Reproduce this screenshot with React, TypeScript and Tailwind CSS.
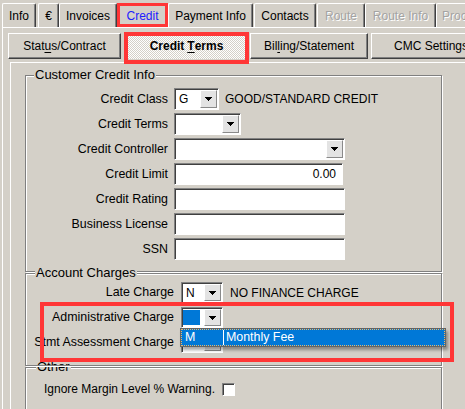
import React from "react";

const sunken =
  "border border-t-[#828282] border-l-[#828282] border-b-white border-r-white shadow-[inset_1px_1px_0_#404040]";
const raised =
  "border border-t-white border-l-white border-r-[#404040] border-b-[#404040] shadow-[inset_-1px_-1px_0_#808080]";
const etched = "border border-[#808080] shadow-[inset_1px_1px_0_#fff,1px_1px_0_#fff]";

function Arrow() {
  return (
    <svg width="7" height="4" viewBox="0 0 7 4" shapeRendering="crispEdges">
      <path d="M0 0h7L3.5 4z" fill="#000" />
    </svg>
  );
}

function Combo({ w, value = "", sel = false }: { w: string; value?: string; sel?: boolean }) {
  return (
    <div className={`flex h-full ${w} bg-white ${sunken}`}>
      <div className="flex-1 flex items-center pl-[4px] pr-[1px]">
        {sel ? <div className="h-[15px] w-full -ml-[3px] bg-[#0078d7]" /> : value}
      </div>
      <div className="w-[17px] my-[1px] mr-[1px] flex items-center justify-center bg-[#e3e3e3] border border-t-white border-l-white border-r-[#8a8a8a] border-b-[#8a8a8a]">
        <Arrow />
      </div>
    </div>
  );
}

function Field({ w = "w-[171px]", value = "" }: { w?: string; value?: string }) {
  return (
    <div className={`h-full ${w} bg-white ${sunken} flex items-center justify-end pr-[6px]`}>
      {value}
    </div>
  );
}

function Row1({ label, children }: { label: string; children: React.ReactNode }) {
  return (
    <div className="flex items-center h-[22px]">
      <div className="w-[142px] text-right whitespace-nowrap text-[12.4px]">{label}</div>
      <div className="ml-[6px] h-full flex items-center gap-[6px] whitespace-nowrap">{children}</div>
    </div>
  );
}

function Row2({ label, children }: { label: string; children: React.ReactNode }) {
  return (
    <div className="flex items-center h-[21px]">
      <div className="w-[148px] text-right whitespace-nowrap text-[12.4px]">{label}</div>
      <div className="ml-[7px] h-full flex items-center gap-[7px] whitespace-nowrap">{children}</div>
    </div>
  );
}

const tabs = [
  { t: "Info", c: "w-[34px]" },
  { t: "€", c: "w-[21px] ml-[2px]" },
  { t: "Invoices", c: "w-[58px]" },
  { t: "Credit", c: "w-[51px]", active: true },
  { t: "Payment Info", c: "w-[85px]" },
  { t: "Contacts", c: "w-[62px] ml-[1px]" },
  { t: "Route", c: "w-[48px] ml-[1px]", off: true },
  { t: "Route Info", c: "w-[71px]", off: true },
  { t: "Proc", c: "w-[70px] justify-start pl-[5px]", off: true },
];

export default function App() {
  return (
    <div className="w-[465px] h-[409px] overflow-hidden bg-[#d4d0c8] text-[12px] text-black font-['Liberation_Sans',Arial,sans-serif] leading-none">
      {/* top tabs */}
      <div className="flex items-end h-[27px] pl-[2px] pt-[3px]">
        {tabs.map((tab) => (
          <div
            key={tab.t}
            className={`relative shrink-0 h-[24px] pt-[1px] flex items-center justify-center whitespace-nowrap rounded-t-[2px] border-t border-l border-white border-r border-r-[#404040] shadow-[inset_-1px_0_0_#808080] ${tab.c} ${
              tab.active ? "text-[#2020ff]" : tab.off ? "text-[#a3a3a3] [text-shadow:1px_1px_0_#fff]" : ""
            }`}
          >
            {tab.t}
            {tab.active && <div className="absolute -left-[1px] -right-[1px] -top-[1px] bottom-0 border-[3px] border-[#ff3636]" />}
          </div>
        ))}
      </div>

      {/* tab content */}
      <div className="ml-[2px] border-l border-t border-white pl-[5px] pt-[5px]">
        <div className="flex h-[26px] whitespace-nowrap">
          <div className={`w-[113px] shrink-0 flex items-center justify-center ${raised}`}>
            Stat<span className="underline underline-offset-2">u</span>s/Contract
          </div>
          <div className="relative w-[123px] shrink-0 ml-[4px] flex items-center justify-center font-bold bg-[image:repeating-conic-gradient(#ffffff_0%_25%,#d4d0c8_0%_50%)] bg-[length:2px_2px]">
            Credit <span className="underline underline-offset-2 ml-[3px]">T</span>erms
            <div className="absolute -left-[1px] -right-[1px] -top-[1px] -bottom-[5px] border-4 border-[#ff3636]" />
          </div>
          <div className={`w-[118px] shrink-0 ml-[2px] flex items-center justify-center ${raised}`}>
            Bil<span className="underline underline-offset-2">l</span>ing/Statement
          </div>
          <div className={`w-[120px] shrink-0 ml-[3px] flex items-center justify-center ${raised}`}>
            CMC Settings
          </div>
        </div>

        {/* inner panel */}
        <div className="mt-[3px] ml-[2px] h-[400px] border-l border-t border-white pl-[14px] pt-[12px]">
          {/* Customer Credit Info */}
          <div className={`w-[417px] h-[197px] ${etched}`}>
            <div className="-mt-[8px] ml-[8px] px-[1px] w-fit h-[14px] leading-[14px] text-[13px] bg-[#d4d0c8]">
              Customer Credit Info
            </div>
            <div className="mt-[6px] flex flex-col gap-[3px]">
              <Row1 label="Credit Class">
                <Combo w="w-[45px]" value="G" />
                <span>GOOD/STANDARD CREDIT</span>
              </Row1>
              <Row1 label="Credit Terms">
                <Combo w="w-[67px]" />
              </Row1>
              <Row1 label="Credit Controller">
                <Combo w="w-[171px]" />
              </Row1>
              <Row1 label="Credit Limit">
                <Field w="w-[169px]" value="0.00" />
              </Row1>
              <Row1 label="Credit Rating">
                <Field />
              </Row1>
              <Row1 label="Business License">
                <Field />
              </Row1>
              <Row1 label="SSN">
                <Field />
              </Row1>
            </div>
          </div>

          {/* Account Charges */}
          <div className={`relative mt-[1px] w-[417px] h-[93px] ${etched}`}>
            <div className="-mt-[8px] ml-[9px] px-[1px] w-fit h-[14px] leading-[14px] text-[13px] bg-[#d4d0c8]">
              Account Charges
            </div>
            <div className="mt-[2px] flex flex-col gap-[4px]">
              <Row2 label="Late Charge">
                <Combo w="w-[42px]" value="N" />
                <span>NO FINANCE CHARGE</span>
              </Row2>
              <Row2 label="Administrative Charge">
                <Combo w="w-[42px]" sel />
              </Row2>
              <Row2 label="Stmt Assessment Charge">
                <Combo w="w-[42px]" />
              </Row2>
            </div>

            {/* open dropdown list */}
            <div className="absolute left-[154px] top-[54px] w-[266px] h-[19px] border border-[#646464] bg-[#0078d7] shadow-[2px_3px_3px_rgba(0,0,0,0.35)]">
              <div className="flex h-full border border-dotted border-[#e9b66b] text-white text-[12.4px]">
                <div className="w-[42px] pl-[3px] flex items-center border-r border-white">M</div>
                <div className="pl-[2px] flex items-center">Monthly Fee</div>
              </div>
            </div>

            <div className="absolute left-[14px] top-[28px] w-[414px] h-[60px] border-4 border-[#ff3636]" />
          </div>

          {/* Other */}
          <div className={`mt-[1px] w-[417px] h-[60px] ${etched}`}>
            <div className="-mt-[8px] ml-[10px] px-[1px] w-fit h-[14px] leading-[14px] text-[13px] bg-[#d4d0c8]">Other</div>
            <div className="mt-[7px] ml-[18px] flex items-center h-[16px]">
              <span className="w-[178px] whitespace-nowrap">Ignore Margin Level % Warning.</span>
              <div className={`w-[13px] h-[13px] bg-white ${sunken}`} />
            </div>
          </div>
        </div>
      </div>
    </div>
  );
}
